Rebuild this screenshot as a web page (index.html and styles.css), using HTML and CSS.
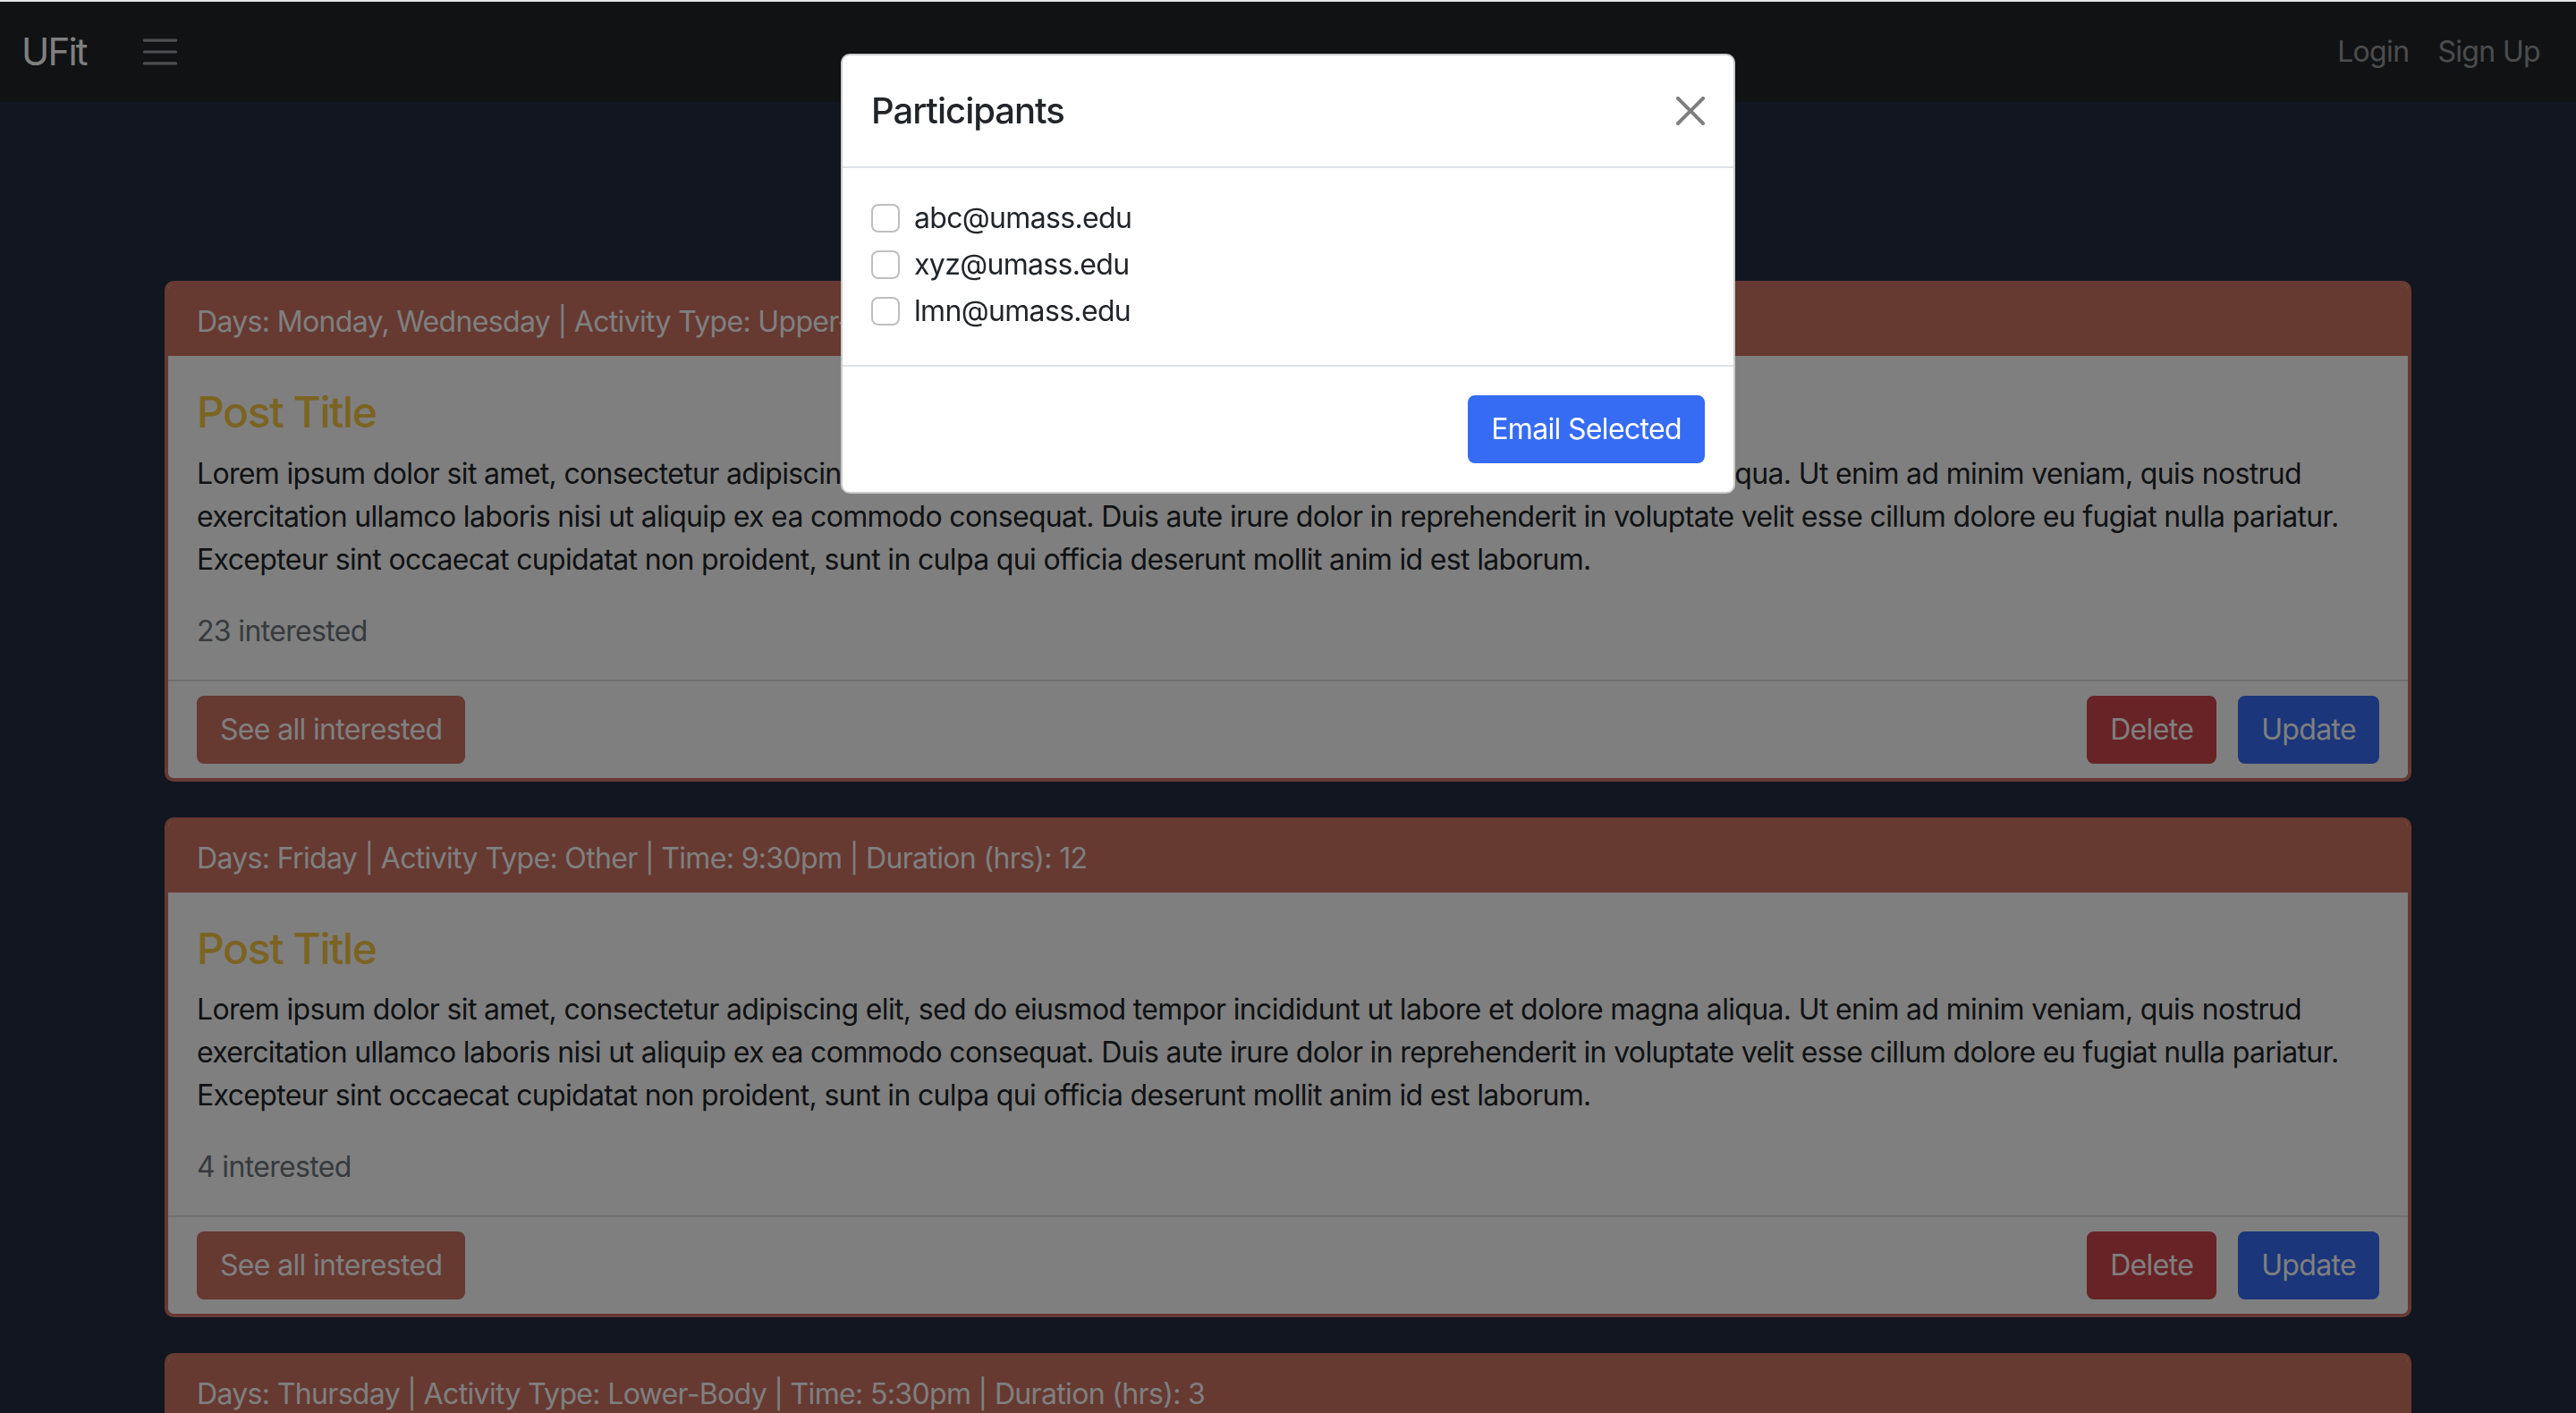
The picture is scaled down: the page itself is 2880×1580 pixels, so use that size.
FILE: index.html
```html
<!DOCTYPE html>
<html lang="en">
<head>
<meta charset="utf-8">
<title>UFit</title>
<link rel="stylesheet" href="styles.css">
</head>
<body>
<div class="chrome-line"></div>
<nav class="navbar">
  <div class="nav-left">
    <a class="brand" href="#">UFit</a>
    <button class="toggler" type="button" aria-label="Toggle navigation">
      <svg class="toggler-icon" viewBox="0 0 30 30" width="24" height="24" aria-hidden="true">
        <path d="M4 7h22M4 15h22M4 23h22" stroke="rgba(255,255,255,0.55)" stroke-width="2" stroke-linecap="round" stroke-miterlimit="10" fill="none"/>
      </svg>
    </button>
  </div>
  <div class="nav-right">
    <a class="nav-link" href="#">Login</a>
    <a class="nav-link" href="#">Sign Up</a>
  </div>
</nav>

<main class="posts">
  <article class="card">
    <div class="card-header">Days: Monday, Wednesday | Activity Type: Upper-Body | Time: 6:00pm | Duration (hrs): 1</div>
    <div class="card-body">
      <h4 class="post-title">Post Title</h4>
      <p class="card-text">Lorem ipsum dolor sit amet, consectetur adipiscing elit, sed do eiusmod tempor incididunt ut labore et dolore magna aliqua. Ut enim ad minim veniam, quis nostrud exercitation ullamco laboris nisi ut aliquip ex ea commodo consequat. Duis aute irure dolor in reprehenderit in voluptate velit esse cillum dolore eu fugiat nulla pariatur. Excepteur sint occaecat cupidatat non proident, sunt in culpa qui officia deserunt mollit anim id est laborum.</p>
      <div class="interested">23 interested</div>
    </div>
    <div class="card-footer">
      <button class="btn btn-brown" type="button">See all interested</button>
      <div class="footer-actions">
        <button class="btn btn-danger" type="button">Delete</button>
        <button class="btn btn-primary" type="button">Update</button>
      </div>
    </div>
  </article>

  <article class="card">
    <div class="card-header">Days: Friday | Activity Type: Other | Time: 9:30pm | Duration (hrs): 12</div>
    <div class="card-body">
      <h4 class="post-title">Post Title</h4>
      <p class="card-text">Lorem ipsum dolor sit amet, consectetur adipiscing elit, sed do eiusmod tempor incididunt ut labore et dolore magna aliqua. Ut enim ad minim veniam, quis nostrud exercitation ullamco laboris nisi ut aliquip ex ea commodo consequat. Duis aute irure dolor in reprehenderit in voluptate velit esse cillum dolore eu fugiat nulla pariatur. Excepteur sint occaecat cupidatat non proident, sunt in culpa qui officia deserunt mollit anim id est laborum.</p>
      <div class="interested">4 interested</div>
    </div>
    <div class="card-footer">
      <button class="btn btn-brown" type="button">See all interested</button>
      <div class="footer-actions">
        <button class="btn btn-danger" type="button">Delete</button>
        <button class="btn btn-primary" type="button">Update</button>
      </div>
    </div>
  </article>

  <article class="card">
    <div class="card-header">Days: Thursday | Activity Type: Lower-Body | Time: 5:30pm | Duration (hrs): 3</div>
    <div class="card-body">
      <h4 class="post-title">Post Title</h4>
      <p class="card-text">Lorem ipsum dolor sit amet, consectetur adipiscing elit, sed do eiusmod tempor incididunt ut labore et dolore magna aliqua. Ut enim ad minim veniam, quis nostrud exercitation ullamco laboris nisi ut aliquip ex ea commodo consequat. Duis aute irure dolor in reprehenderit in voluptate velit esse cillum dolore eu fugiat nulla pariatur. Excepteur sint occaecat cupidatat non proident, sunt in culpa qui officia deserunt mollit anim id est laborum.</p>
      <div class="interested">9 interested</div>
    </div>
    <div class="card-footer">
      <button class="btn btn-brown" type="button">See all interested</button>
      <div class="footer-actions">
        <button class="btn btn-danger" type="button">Delete</button>
        <button class="btn btn-primary" type="button">Update</button>
      </div>
    </div>
  </article>
</main>

<div class="backdrop"></div>

<div class="modal" role="dialog" aria-labelledby="participants-title">
  <div class="modal-dialog">
    <div class="modal-content">
      <div class="modal-header">
        <h5 class="modal-title" id="participants-title">Participants</h5>
        <button class="btn-close" type="button" aria-label="Close">
          <svg viewBox="0 0 16 16" width="16" height="16" aria-hidden="true">
            <path fill="#000" d="M.293.293a1 1 0 0 1 1.414 0L8 6.586 14.293.293a1 1 0 1 1 1.414 1.414L9.414 8l6.293 6.293a1 1 0 0 1-1.414 1.414L8 9.414l-6.293 6.293a1 1 0 0 1-1.414-1.414L6.586 8 .293 1.707a1 1 0 0 1 0-1.414z"/>
          </svg>
        </button>
      </div>
      <div class="modal-body">
        <label class="form-check"><input class="form-check-input" type="checkbox"> abc@umass.edu</label>
        <label class="form-check"><input class="form-check-input" type="checkbox"> xyz@umass.edu</label>
        <label class="form-check"><input class="form-check-input" type="checkbox"> lmn@umass.edu</label>
      </div>
      <div class="modal-footer">
        <button class="btn btn-primary btn-email" type="button">Email Selected</button>
      </div>
    </div>
  </div>
</div>
</body>
</html>
```

FILE: styles.css
```css
html {
  zoom: 2;
}

* {
  box-sizing: border-box;
}

body {
  margin: 0;
  background: #232c42;
  font-family: "Inter", "Noto Sans", sans-serif;
  font-size: 16px;
  line-height: 1.5;
  letter-spacing: -0.33px;
  color: #212529;
  overflow: hidden;
}

.chrome-line {
  height: 1px;
  background: #e4e4e4;
  position: relative;
  z-index: 10;
}

/* ---------- navbar ---------- */
.navbar {
  background: #212529;
  display: flex;
  align-items: center;
  justify-content: space-between;
  padding: 8px 12px;
  height: 56px;
}

.nav-left {
  display: flex;
  align-items: center;
}

.brand {
  color: #fff;
  text-decoration: none;
  font-size: 21px;
  line-height: 30px;
  padding: 5px 0;
  margin-right: 16px;
  letter-spacing: -0.9px;
}

.toggler {
  display: flex;
  align-items: center;
  background: transparent;
  border: 1px solid transparent;
  padding: 4px 12px;
  margin: 0;
  line-height: 1;
}

.toggler-icon {
  display: block;
}

.nav-right {
  display: flex;
  align-items: center;
}

.nav-link {
  color: rgba(255, 255, 255, 0.55);
  text-decoration: none;
  padding: 8px;
  line-height: 24px;
}

/* ---------- posts ---------- */
.posts {
  padding-top: 100px;
  width: 1256px;
  margin: 0 auto;
}

.card {
  background: #fff;
  border: 2px solid #cc7262;
  border-radius: 5px;
  margin-bottom: 20px;
  overflow: hidden;
}

.card-header {
  background: #cc7262;
  color: #fff;
  padding: 9px 16px 7px;
  line-height: 24px;
}

.card-body {
  padding: 17px 16px 15px;
}

.post-title {
  margin: 0 0 8px;
  font-size: 24px;
  font-weight: 500;
  line-height: 1.2;
  letter-spacing: -0.7px;
  color: #f7c744;
}

.card-text {
  margin: 0 0 16px;
}

.interested {
  color: #6c757d;
}

.card-footer {
  border-top: 1px solid #dfdfdf;
  padding: 8px 16px;
  display: flex;
  align-items: center;
  justify-content: space-between;
}

.footer-actions {
  display: flex;
  gap: 12px;
}

.btn {
  font-family: inherit;
  font-size: 16px;
  line-height: 24px;
  letter-spacing: -0.33px;
  padding: 6px 12px;
  border-radius: 4px;
  border: 1px solid transparent;
  color: #fff;
  cursor: pointer;
}

.btn-brown {
  background: #cc7262;
  border-color: #cc7262;
}

.btn-danger {
  background: #d0464c;
  border-color: #d0464c;
}

.btn-primary {
  background: #366cf4;
  border-color: #366cf4;
}

/* ---------- modal ---------- */
.backdrop {
  position: fixed;
  top: 1px;
  left: 0;
  right: 0;
  bottom: 0;
  background: rgba(0, 0, 0, 0.5);
  z-index: 20;
}

.modal {
  position: fixed;
  inset: 0;
  z-index: 30;
}

.modal-dialog {
  width: 500px;
  margin: 30px auto 0;
}

.modal-content {
  background: #fff;
  border: 1px solid rgba(0, 0, 0, 0.2);
  border-radius: 5px;
}

.modal-header {
  display: flex;
  align-items: center;
  justify-content: space-between;
  padding: 16px;
  border-bottom: 1px solid #dee2e6;
}

.modal-title {
  margin: 0;
  font-size: 20px;
  font-weight: 500;
  line-height: 1.5;
  letter-spacing: -0.5px;
  color: #212529;
}

.btn-close {
  background: transparent;
  border: 0;
  padding: 8px;
  margin: -8px -8px -8px auto;
  opacity: 0.5;
  line-height: 0;
  cursor: pointer;
}

.btn-close svg {
  display: block;
}

.modal-body {
  padding: 16px;
}

.form-check {
  display: block;
  min-height: 24px;
  padding-left: 24px;
  margin-bottom: 2px;
  color: #212529;
}

.form-check-input {
  float: left;
  appearance: none;
  width: 16px;
  height: 16px;
  margin: 4px 0 0 -24px;
  border: 1px solid rgba(0, 0, 0, 0.25);
  border-radius: 4px;
  background: #fff;
}

.modal-footer {
  display: flex;
  justify-content: flex-end;
  align-items: center;
  padding: 12px;
  border-top: 1px solid #dee2e6;
}

.btn-email {
  margin: 4px;
}
```
